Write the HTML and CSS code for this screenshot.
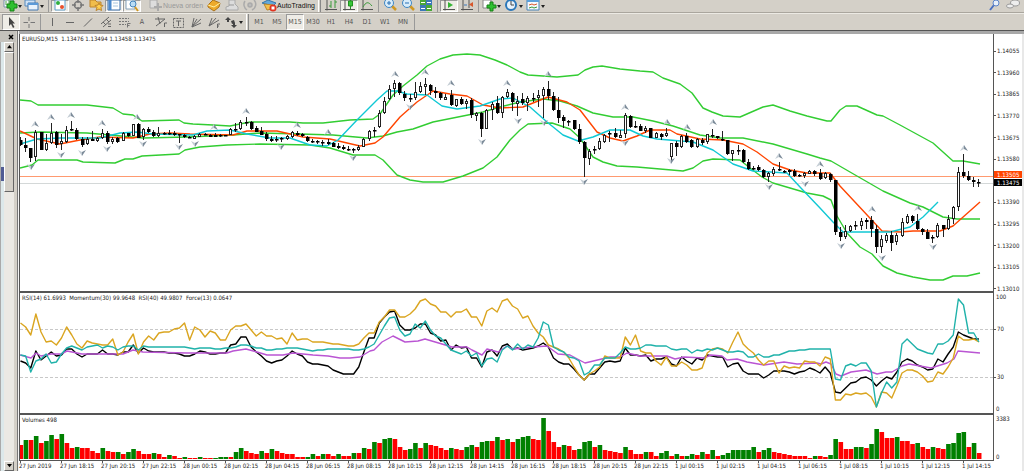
FILE: index.html
```html
<!DOCTYPE html>
<html lang="es">

<head>
    <meta charset="UTF-8">
    <meta name="viewport" content="width=device-width, initial-scale=1.0">
    <title>EURUSD,M15</title>
    <link rel="stylesheet" href="styles.css">
</head>

<body>
    <header>
        <div class="toolbar toolbar-main">
            <button class="tool drop" aria-label="New chart"><svg viewBox="0 0 16 12"><path d="M2 0h9v7H2z" fill="#fff" stroke="#7890a8"/><path d="M4 1v4M7 0v4" stroke="#48a048"/><path d="M8 1h4v3h3v4h-3v3H8V8H5V4h3z" fill="#2fc02f" stroke="#168016"/></svg></button>
            <button class="tool drop" aria-label="Profiles"><svg viewBox="0 0 16 12"><path d="M1 0h10v6H1z" fill="#cfe2f5" stroke="#5488bc"/><path d="M4 3h10v7H4z" fill="#e8f2fc" stroke="#4478b0"/><path d="M4 4h10" stroke="#5b9ad8" stroke-width="2"/></svg></button>
            <span class="sep"></span>
            <button class="tool pressed" aria-label="Market watch"><svg viewBox="0 0 16 12"><path d="M3 0h10v10H3z" fill="#fff" stroke="#5c9cc8"/><circle cx="6" cy="3" r="2" fill="#2fae3f"/><circle cx="10" cy="7" r="2" fill="#e8502c"/></svg></button>
            <button class="tool" aria-label="Data window"><svg viewBox="0 0 16 12" fill="none" stroke="#777" stroke-width="1.5"><circle cx="8" cy="5" r="3.5"/><path d="M8-1v4M8 7v4M2 5h4M10 5h4"/></svg></button>
            <button class="tool" aria-label="Navigator"><svg viewBox="0 0 16 12"><path d="M2 0h5l2 2h4v5H2z" fill="#f0bd4c" stroke="#bd842c"/><path d="M11 3l1 2 3 .5-2 2 .5 3-2.5-1.5L8 10.5l1-3-2-2 3-.5z" fill="#ffcf50" stroke="#bd842c"/></svg></button>
            <button class="tool pressed" aria-label="Terminal"><svg viewBox="0 0 16 12"><path d="M2 0h12v10H2z" fill="#fff" stroke="#386ca8"/><path d="M4 0v10" stroke="#4a88cc" stroke-width="3"/><path d="M7 3h5M7 6h5" stroke="#a8c6e0"/></svg></button>
            <button class="tool pressed" aria-label="Strategy tester"><svg viewBox="0 0 16 12"><path d="M2 0h9v9H2z" fill="#fff" stroke="#84a0b8"/><circle cx="9" cy="4" r="3" fill="#b9dcf5" stroke="#4484bc"/><path d="M11 7l3 4" stroke="#d09824" stroke-width="2"/></svg></button>
            <button class="tool wide order" disabled><svg viewBox="0 0 16 12"><path d="M3 0h7v8H3z" fill="#ddd" stroke="#aaa"/><path d="M10 3h2v3h3v2h-3v3h-2V8H7V6h3z" fill="#aaa"/></svg>Nueva orden</button>
            <button class="tool" aria-label="MetaEditor"><svg viewBox="0 0 16 12"><path d="M2 5l5-5 7 3-1 4-5 4-6-4z" fill="#edaa2c" stroke="#aa731c"/><path d="M2 5l6 2 6-4" fill="none" stroke="#fff0a0"/></svg></button>
            <button class="tool" aria-label="Accounts"><svg viewBox="0 0 16 12"><path d="M5 0h6v4l3 3v3H2V7l3-1z" fill="#dcdcdc" stroke="#aaa"/><path d="M5 5h5" stroke="#999"/></svg></button>
            <button class="tool" aria-label="Signals"><svg viewBox="0 0 16 12" fill="none" stroke="#aaa" stroke-width="1.5"><circle cx="8" cy="5" r="2" fill="#bbb"/><path d="M3 1c-2 3-1 7 2 9M12 0c3 3 2 8-2 10"/></svg></button>
            <button class="tool wide auto"><svg viewBox="0 0 16 12"><path d="M1 3l6-3 8 3-3 3z" fill="#62a8da" stroke="#3576a8"/><path d="M3 4l3 6 5-1 1-4z" fill="#f2c04c" stroke="#b98528"/><circle cx="12" cy="8" r="3.5" fill="#e03420"/><path d="M10.5 6.5h3v3h-3z" fill="#fff"/></svg>AutoTrading</button>
            <span class="handle"></span>
            <button class="tool" aria-label="Bar chart"><svg viewBox="0 0 16 12" fill="none" stroke="#555"><path d="M4 0v10.5M2 9.500h12"/><path d="M8 1v7M6 6h2M12 0v8M12 2h2" stroke="#3a9a3a"/></svg></button>
            <button class="tool pressed" aria-label="Candlesticks"><svg viewBox="0 0 16 12" fill="none" stroke="#555"><path d="M4 0v10.5M2 9.500h12"/><path d="M9.500 0v9" stroke="#2a8a2a"/><path d="M7.500 1h4v5h-4z" fill="#38c838" stroke="#229022"/></svg></button>
            <button class="tool" aria-label="Line chart"><svg viewBox="0 0 16 12" fill="none" stroke="#555"><path d="M4 0v10.5M2 9.500h12"/><path d="M4 7c3-5 5-6 9-1" stroke="#3a9a3a"/></svg></button>
            <span class="sep"></span>
            <button class="tool" aria-label="Zoom in"><svg viewBox="0 0 16 12"><path d="M10 6l4 4" stroke="#d09824" stroke-width="2.5"/><circle cx="7" cy="3" r="4.5" fill="#d8ecfa" stroke="#3e86c4"/><path d="M5 3h4M7 1v4" stroke="#2870b4"/></svg></button>
            <button class="tool" aria-label="Zoom out"><svg viewBox="0 0 16 12"><path d="M10 6l4 4" stroke="#d09824" stroke-width="2.5"/><circle cx="7" cy="3" r="4.5" fill="#d8ecfa" stroke="#3e86c4"/><path d="M5 3h4" stroke="#2870b4"/></svg></button>
            <button class="tool" aria-label="Tile windows"><svg viewBox="0 0 16 12"><path d="M2 0h6v5H2z" fill="#48a838"/><path d="M8 0h6v5H8z" fill="#3c78b8"/><path d="M2 5h6v6H2z" fill="#3c78b8"/><path d="M8 5h6v6H8z" fill="#48a838"/><path d="M3 2.500h4M9 2.500h4M3 8.500h4M9 8.500h4" stroke="#fff"/></svg></button>
            <span class="sep"></span>
            <button class="tool pressed" aria-label="Auto scroll"><svg viewBox="0 0 16 12"><path d="M4 0v10.5M2 9.500h12" stroke="#555"/><path d="M7 2l5 3-5 3z" fill="#35b435"/></svg></button>
            <button class="tool" aria-label="Chart shift"><svg viewBox="0 0 16 12"><path d="M4 0v10.5M2 9.500h12M10 0v8" stroke="#555"/><path d="M14 2v5l-4-2.500z" fill="#d8582c"/><path d="M5 5h3" stroke="#3c78b8"/></svg></button>
            <span class="sep"></span>
            <button class="tool drop" aria-label="Indicators"><svg viewBox="0 0 16 12"><path d="M2 0h8v8H2z" fill="#fff" stroke="#888"/><path d="M9 2h3v3h3v3h-3v3H9V8H6V5h3z" fill="#2fc02f" stroke="#168016"/></svg></button>
            <button class="tool drop" aria-label="Periods"><svg viewBox="0 0 16 12"><circle cx="8" cy="5" r="5" fill="#e7f2fb" stroke="#2c78ba" stroke-width="2"/><path d="M8 1v4h3" stroke="#444" fill="none"/></svg></button>
            <button class="tool drop" aria-label="Templates"><svg viewBox="0 0 16 12"><path d="M2 0h12v10H2z" fill="#f4f8fc" stroke="#4884b8"/><path d="M2 1h12" stroke="#5aa0dc" stroke-width="2"/><path d="M4 5l3-1 2 1 3-1" stroke="#d8582c" fill="none"/><path d="M4 8l3-1 2 1 3-1" stroke="#3a9a3a" fill="none"/></svg></button>
            <span class="spacer"></span>
            <button class="tool" aria-label="Search"><svg viewBox="0 0 16 12"><path d="M7 5L3 10" stroke="#496fc0" stroke-width="2"/><circle cx="9" cy="3" r="3" fill="#e8f0fa" stroke="#5b83c8"/></svg></button>
            <button class="tool" aria-label="Chat"><svg viewBox="0 0 16 12" fill="#eee" stroke="#999"><ellipse cx="10" cy="3" rx="4.5" ry="3"/><ellipse cx="5" cy="6" rx="3.5" ry="2"/></svg></button>
        </div>

        <div class="toolbar toolbar-draw">
            <button class="tool pressed" aria-label="Cursor"><svg viewBox="0 0 16 16"><path d="M6 3v9l2-2 2 4 1.500-1-2-3.500H12z" fill="#444"/></svg></button>
            <button class="tool" aria-label="Crosshair"><svg viewBox="0 0 16 16"><path d="M8 3v4M8 10v4M2.500 8.500H7M9.500 8.500H14" stroke="#777"/></svg></button>
            <span class="sep"></span>
            <button class="tool" aria-label="Vertical line"><svg viewBox="0 0 16 16"><path d="M8.500 4v8" stroke="#666"/></svg></button>
            <button class="tool" aria-label="Horizontal line"><svg viewBox="0 0 16 16"><path d="M4 8.500h8" stroke="#666"/></svg></button>
            <button class="tool" aria-label="Trendline"><svg viewBox="0 0 16 16"><path d="M4 12.500l8-8" stroke="#666"/></svg></button>
            <button class="tool" aria-label="Channel"><svg viewBox="0 0 16 16" fill="none" stroke="#666"><path d="M3 10l8-7M5 13l8-7M5 8l3 3M8 5l3 3M10 10h3M10 12.500h3"/></svg></button>
            <button class="tool" aria-label="Fibonacci"><svg viewBox="0 0 16 16" fill="none" stroke="#777"><path d="M3 4.500h10M3 7.500h10M3 10.500h7" stroke-dasharray="2 1"/><path d="M11.500 13.500v-4h3M11.500 11.500h2"/></svg></button>
            <button class="tool" aria-label="Text">A</button>
            <button class="tool" aria-label="Andrews pitchfork"><svg viewBox="0 0 16 16" fill="none" stroke="#666"><path d="M3 5h10M6 3l2 7M4 12l9-7M12.500 13V9H15"/></svg></button>
            <button class="tool" aria-label="Text label"><svg viewBox="0 0 16 16" fill="none" stroke="#666"><path d="M3.500 4.500h10v9h-10z" stroke-dasharray="2 1"/><path d="M6 7h5M8.500 7v5"/></svg></button>
            <button class="tool" aria-label="Gann fan"><svg viewBox="0 0 16 16" fill="none" stroke="#666"><path d="M4 13L6 4M4 13l5-8M4 13l9-8M4 13l9-4"/></svg></button>
            <button class="tool" aria-label="Fibonacci fan"><svg viewBox="0 0 16 16" fill="none" stroke="#666"><path d="M3 12l3-8M3 12l7-8M3 12l10-6M11.500 14v-4H14M11 12h2"/></svg></button>
            <button class="tool drop" aria-label="Arrows"><svg viewBox="0 0 16 16" fill="#444"><path d="M5 3l3 3H6v2H4V6H2zM8 7l3-1 1 3-3 1zM11 14l-3-3h2V9h2v2h2z"/></svg></button>
            <span class="handle"></span>
            <button class="tool">M1</button>
            <button class="tool">M5</button>
            <button class="tool pressed">M15</button>
            <button class="tool">M30</button>
            <button class="tool">H1</button>
            <button class="tool">H4</button>
            <button class="tool">D1</button>
            <button class="tool">W1</button>
            <button class="tool">MN</button>
            <span class="sep"></span>
        </div>
    </header>

    <div class="workspace">
        <aside>
            <button class="close" aria-label="Close"><svg viewBox="0 0 6 6"><path d="M1 1l4 4M5 1L1 5" stroke="#000" stroke-width="1.5"/></svg></button>
            <div class="list">
                <div class="strip"><span class="selected"></span></div>
                <div class="scrollbar">
                    <button class="arrow" aria-label="Up"><svg viewBox="0 0 6 4"><path d="M3 0l3 4H0z"/></svg></button>
                    <span class="thumb"></span>
                    <span class="track"></span>
                    <button class="arrow" aria-label="Down"><svg viewBox="0 0 6 4"><path d="M0 0h6L3 4z"/></svg></button>
                </div>
            </div>
        </aside>

        <main>
            <section class="plot">
                <h1>EURUSD,M15&nbsp; 1.13476 1.13494 1.13458 1.13475</h1>
                <svg id="price" viewBox="20 34 973 257" preserveAspectRatio="none"></svg>
            </section>
            <div class="axis axis-price">
                <span>1.14055</span>
                <span>1.13960</span>
                <span>1.13865</span>
                <span>1.13770</span>
                <span>1.13675</span>
                <span>1.13580</span>
                <span class="blank"></span>
                <span>1.13390</span>
                <span>1.13295</span>
                <span>1.13200</span>
                <span>1.13105</span>
                <span>1.13010</span>
                <b class="tag ask">1.13505</b>
                <b class="tag bid">1.13475</b>
            </div>

            <section class="plot">
                <h2>RSI(14) 61.6993&nbsp; Momentum(30) 99.9648&nbsp; RSI(40) 49.9807&nbsp; Force(13) 0.0647</h2>
                <svg id="indicators" viewBox="20 293 973 120" preserveAspectRatio="none"></svg>
            </section>
            <div class="axis axis-indicators">
                <span>100</span>
                <span class="level">70</span>
                <span class="level">30</span>
                <span>0</span>
            </div>

            <section class="plot plot-volume">
                <h2>Volumes 498</h2>
                <svg id="volumes" viewBox="20 415 973 45" preserveAspectRatio="none"></svg>
            </section>
            <div class="axis axis-volume">
                <span>3383</span>
                <span>0</span>
            </div>

            <div class="times" id="times"></div>
        </main>
    </div>

    <script src="script.js"></script>
</body>

</html>
```
FILE: styles.css
```css
*,
*::before,
*::after {
    box-sizing: border-box;
}

body {
    margin: 0;
    height: 100vh;
    display: flex;
    flex-direction: column;
    overflow: hidden;
    background-color: #d4d0c8;
    color: #222;
    font-family: "DejaVu Sans Condensed", "DejaVu Sans", sans-serif;
    font-size: 6px;
    line-height: 8px;
}

button {
    margin: 0;
    padding: 0;
    border: 0;
    background: none;
    color: inherit;
    font: inherit;
}

h1,
h2 {
    position: absolute;
    top: 1px;
    left: 2px;
    margin: 0;
    font-size: 6px;
    font-weight: normal;
}

svg {
    display: block;
}

/* toolbars */

.toolbar {
    display: flex;
    align-items: center;
    padding-left: 2px;
}

.toolbar-main {
    height: 13px;
    padding-right: 2px;
    border-bottom: 1px solid #aaa69e;
}

.toolbar-draw {
    height: 18px;
    border-top: 1px solid #eceae4;
    border-bottom: 1px solid #555;
}

.tool {
    flex: none;
    width: 18px;
    height: 100%;
    display: flex;
    align-items: center;
    justify-content: center;
    font-family: "DejaVu Sans Condensed", "DejaVu Sans", sans-serif;
    font-size: 7px;
    color: #555;
}

.tool svg {
    width: 16px;
    flex: none;
}

.drop {
    width: 22px;
    justify-content: flex-start;
}

.drop::after {
    content: '';
    border: 2px solid transparent;
    border-top: 3px solid #222;
    border-bottom: 0;
}

.wide {
    width: auto;
    padding: 0 2px;
    font-family: "Liberation Sans", sans-serif;
}

.order {
    color: #999;
    padding-left: 6px;
}

.auto {
    color: #111;
}

.pressed {
    background-color: #eeece6;
    border: 1px solid #fff;
    border-top-color: #999;
    border-left-color: #999;
}

.sep {
    flex: none;
    width: 1px;
    height: 100%;
    margin: 0 2px;
    background-color: #999;
}

.handle {
    flex: none;
    width: 3px;
    height: 100%;
    margin: 0 1px;
    border-left: 1px solid #fff;
    border-right: 1px solid #888;
}

.spacer {
    flex: 1;
}

/* left panel */

.workspace {
    flex: 1;
    min-height: 0;
    display: flex;
}

aside {
    width: 19px;
    display: flex;
    flex-direction: column;
    border-right: 1px solid #f4f4f4;
    box-shadow: inset -1px 0 #777;
}

.close {
    height: 11px;
    padding-left: 8px;
    background-color: #c4c2bc;
    margin-right: 2px;
}

.close svg {
    width: 6px;
}

.list {
    flex: 1;
    display: flex;
}

.strip {
    width: 4px;
    padding-top: 125px;
    background-color: #dce8ea;
    border-left: 1px solid #aaa;
}

.selected {
    display: block;
    height: 14px;
    background-color: #505c94;
}

.scrollbar {
    width: 10px;
    display: flex;
    flex-direction: column;
    background-color: #ebe9e4;
}

.arrow,
.thumb {
    background-color: #d4d0c8;
    border: 1px solid #fff;
    border-right-color: #666;
    border-bottom-color: #666;
}

.arrow {
    height: 10px;
    display: flex;
    align-items: center;
    justify-content: center;
}

.arrow svg {
    width: 5px;
}

.thumb {
    flex: 34;
}

.track {
    flex: 66;
}

/* charts */

main {
    flex: 1;
    min-width: 0;
    display: grid;
    grid-template-columns: minmax(0, 1fr) 30px;
    grid-template-rows: minmax(0, 259fr) minmax(0, 122fr) minmax(0, 46fr) 10px;
    background-color: #fff;
    border-top: 3px solid #a8a8a8;
}

.plot {
    position: relative;
    border: 1px solid #555;
    border-top: 0;
    border-bottom-width: 2px;
}

.plot-volume {
    border-bottom-width: 1px;
}

.plot svg {
    width: 100%;
    height: 100%;
}

.axis {
    position: relative;
    display: flex;
    flex-direction: column;
    justify-content: space-between;
    border-right: 2px solid #e8e8e8;
}

.axis span {
    height: 8px;
    padding-left: 2px;
}

.axis-price {
    padding-top: 13px;
}

.axis-price span,
.level {
    display: flex;
    align-items: center;
}

.axis-price span::before,
.level::before {
    content: '';
    width: 2px;
    height: 1px;
    margin-left: -2px;
    margin-right: 1px;
    background-color: #555;
}

.axis-price .blank {
    visibility: hidden;
}

.tag {
    position: absolute;
    left: 0;
    right: 0;
    padding-left: 3px;
    line-height: 7px;
    font-weight: normal;
    color: #fff;
}

.ask {
    top: 53%;
    background-color: #ff4500;
}

.bid {
    top: 56%;
    background-color: #000;
}

.axis-indicators {
    display: grid;
    grid-template-rows: 32fr 48fr 32fr 10fr;
}

.times {
    grid-column: 1 / -1;
    display: grid;
    grid-template-columns: repeat(23, 41fr) 60fr;
    border-right: 2px solid #e8e8e8;
    white-space: nowrap;
}

.times span {
    min-width: 0;
}

.times span::before {
    content: '';
    display: block;
    width: 1px;
    height: 2px;
    margin: 0 0 -1px 1px;
    background-color: #555;
}

/* drawing */

polyline {
    fill: none;
    stroke-width: 1.4px;
    stroke-linejoin: round;
}

.band {
    stroke: #32cd32;
}

.slow {
    stroke: #ff4500;
}

.fast {
    stroke: #10c8d4;
}

.momentum {
    stroke: #daa520;
}

.rsi14 {
    stroke: #000;
}

.rsi40 {
    stroke: #ba55d3;
}

.force {
    stroke: #20b2aa;
}

.wick {
    stroke: #222;
    stroke-width: 1px;
}

.up {
    fill: #fff;
    stroke: #222;
    stroke-width: 1px;
}

.down {
    fill: #000;
}

.fractal {
    fill: #7c8b99;
}

.fractal-light {
    fill: #c3ccd3;
}

.ask-line {
    stroke: #ff9a70;
}

.bid-line {
    stroke: #d4d8d8;
}

.level-line {
    stroke: #c8c8c8;
    stroke-dasharray: 3 2;
}

.vol-up {
    fill: #008000;
}

.vol-down {
    fill: #f00;
}
```
FILE: script.js
```js
const NS = 'http://www.w3.org/2000/svg'
const x0 = 20.5
const step = 5.125

function add(parent, tag, clase, attrs) {
    const el = document.createElementNS(NS, tag)
    el.setAttribute('class', clase)
    for (const key in attrs) el.setAttribute(key, attrs[key])
    parent.appendChild(el)
}

// one y per bar
function series(parent, clase, values) {
    const points = values.trim().split(/\s+/).map((y, i) => (x0 + i * step) + ',' + y).join(' ')
    add(parent, 'polyline', clase, { points })
}

const price = document.querySelector('#price')
const indicators = document.querySelector('#indicators')
const volumes = document.querySelector('#volumes')

add(price, 'line', 'ask-line', { x1: 20, x2: 993, y1: 176.5, y2: 176.5 })
add(price, 'line', 'bid-line', { x1: 20, x2: 993, y1: 183.5, y2: 183.5 })

// bands
add(price, 'polyline', 'band', { points: '20,100 31,101 38,105 87,105 113,108 123,114 133,115 142,121 179,120 184,123 193,124 213,125 230,126 240,124 250,122 260,122 290,122 303,123 323,123 350,120 373,119 380,114 393,95 403,86 417,75 427,66 440,59 453,55 467,54 480,55 495,60 507,65 520,72 528,75 543,76 557,77 578,75 585,70 593,67 602,66 620,69 640,71 653,72 663,78 680,84 692,93 703,108 712,112 723,116 740,117 763,107 773,105 790,111 807,116 827,121 831,121 840,110 846,106 857,106 877,115 883,116 900,125 933,143 953,161 963,161 980,164' })
add(price, 'polyline', 'band', { points: '20,133 40,132 87,133 110,135 143,138 187,137 233,135 260,133 300,134 333,135 367,138 383,136 397,132 413,129 433,122 463,116 483,112 500,107 520,102 543,99 560,101 577,106 593,113 613,117 633,117 653,121 673,126 700,135 720,138 743,138 773,144 807,154 820,158 831,161 850,172 883,191 910,203 923,207 943,217 957,219 980,219' })
add(price, 'polyline', 'band', { points: '20,168 32,165 38,160 77,160 83,162 115,163 125,159 133,159 142,156 179,154 185,150 200,147 227,145 260,144 310,145 330,148 353,155 375,155 383,160 397,175 410,180 423,182 443,182 463,176 483,168 497,157 510,140 520,130 528,124 552,123 570,129 580,138 593,157 603,162 617,166 637,167 683,171 693,168 703,161 713,159 740,160 750,168 762,177 773,183 790,188 807,193 823,196 831,200 837,216 847,233 860,247 872,254 883,266 897,273 913,277 930,280 943,280 953,276 967,276 980,273' })

// moving averages
add(price, 'polyline', 'slow', { points: '20,131 37,139 60,144 80,140 100,137 133,138 150,134 170,133 190,134 233,135 247,131 277,131 303,137 330,139 360,146 375,143 383,137 400,117 417,102 433,91 450,94 467,96 483,105 500,108 523,107 548,97 567,102 580,110 597,132 610,138 623,141 637,136 650,130 670,130 677,134 700,139 723,140 743,144 757,152 773,164 790,170 807,173 830,173 840,186 882,231 900,232 913,231 940,231 953,226 980,202' })
add(price, 'polyline', 'fast', { points: '20,144 37,139 60,138 100,138 120,133 137,132 153,134 193,135 207,131 230,130 247,134 270,138 290,138 310,145 327,146 338,140 357,120 377,100 387,91 397,91 407,94 427,95 442,106 457,109 480,106 500,99 513,98 530,107 547,122 563,135 578,141 593,137 610,130 630,130 643,136 657,139 693,142 713,150 733,164 753,171 787,173 800,187 820,208 833,222 843,232 890,232 910,227 923,217 938,202' })

// u = up, d = down, then body top, body bottom, high, low
const candles = `
d140,145,137,146 d145,148,138,152 d148,158,148,162 u132,157,130,161 d132,150,132,150 u143,150,134,151 u133,143,123,144 d132,145,131,148
u141,144,134,150 u130,142,126,143 d129,130,121,131 d130,139,128,140 d139,145,137,147 u139,144,137,145 d139,141,131,141 u138,141,137,142
u133,138,129,139 d133,142,131,144 u139,141,137,144 d138,142,137,143 u133,141,132,141 d133,136,133,137 u124,136,124,136 d124,138,123,138
u129,137,128,140 d129,132,127,133 d132,136,130,137 u133,136,127,137 d133,134,132,135 d133,134,130,135 d133,135,131,136 d134,135,134,143
d135,137,134,138 d137,138,136,138 u136,138,135,139 u134,136,133,137 d134,135,133,135 d135,137,134,137 d135,137,133,137 d135,136,134,137
d135,136,135,136 u129,135,128,135 d129,130,123,132 u122,129,120,130 d122,123,117,126 d122,129,121,130 d128,132,126,132 d131,135,127,135
d134,139,132,141 d139,141,136,142 d139,140,136,142 d138,139,137,142 u136,139,135,140 u132,137,131,138 d133,135,131,136 d134,136,133,137
d137,141,136,142 d141,142,139,143 d141,142,140,144 d142,143,140,146 d142,144,139,145 d143,147,142,147 d146,148,143,149 d147,149,145,150
d149,150,146,151 d149,150,148,153 u147,150,145,151 u139,147,138,147 u131,139,130,141 d130,131,127,137 u113,127,110,128 u101,113,97,114
u89,99,85,100 u83,89,80,97 d83,93,82,95 d94,98,91,101 d98,99,94,102 u92,98,82,100 u86,92,82,93 u84,86,78,95
d85,91,84,95 d91,93,87,98 d93,98,92,100 u97,99,94,100 d95,105,90,106 u99,106,99,107 d99,104,97,105 u101,104,99,109
d100,115,98,118 u113,115,112,121 d113,129,112,137 u110,129,109,129 u104,110,102,120 d103,113,96,114 u97,113,96,118 u92,97,89,98
d93,102,92,111 u101,103,96,116 d99,103,93,105 u98,103,96,111 d98,99,93,102 u95,98,90,107 u89,96,87,118 d89,96,81,100
d96,110,92,111 d110,118,97,123 d117,121,115,128 d121,122,120,126 d120,129,120,130 d129,142,124,144 d142,158,141,177 u151,159,149,165
d149,150,146,154 u141,149,138,150 u135,142,134,143 d133,134,131,142 d133,137,128,138 u135,137,130,138 u115,134,113,138 d116,127,115,128
d126,127,121,128 d126,131,124,131 u128,131,126,133 d128,138,128,138 u133,138,132,138 d134,137,133,140 u133,136,128,137 u143,157,143,160
d143,147,141,156 u136,147,135,148 d136,142,133,143 d140,147,139,148 u139,147,138,148 d140,143,138,145 u134,142,134,144 d135,136,129,138
d136,138,136,139 d139,140,131,141 d140,154,140,155 u150,154,150,161 d150,151,145,155 d150,162,149,163 d162,169,159,170 d168,169,166,170
d167,170,165,171 d170,177,169,178 u173,177,172,182 u169,174,167,176 d169,170,162,171 d171,172,170,173 d170,172,169,175 d171,176,169,177
d175,176,174,177 u173,176,172,178 u171,174,170,174 d171,174,170,176 d173,179,169,180 u173,178,172,179 d174,180,173,182 d180,232,180,235
d232,237,227,241 u231,237,225,239 u226,231,225,232 d225,226,221,230 u221,226,218,230 d220,222,218,229 d220,229,216,237 d229,247,225,253
u239,247,235,253 u235,241,233,243 d235,243,231,251 u235,242,233,245 u222,236,218,237 u216,223,214,224 d216,221,215,223 d221,229,214,230
d229,232,228,235 d232,239,229,239 d237,238,235,243 u225,237,223,238 d225,229,225,237 u219,229,215,230 u207,219,206,224 u172,207,167,211
d172,176,154,178 d176,180,171,181 d180,182,177,187 d182,183,179,187`

candles.trim().split(/\s+/).forEach((item, i) => {
    const [top, bottom, high, low] = item.slice(1).split(',').map(Number)
    const x = Math.round(x0 + i * step - 0.5) + 0.5
    add(price, 'line', 'wick', { x1: x, x2: x, y1: high, y2: low })
    if (item[0] === 'u') {
        add(price, 'rect', 'up', { x: x - 1, y: top + 0.5, width: 2, height: Math.max(bottom - top - 1, 2) })
    } else {
        add(price, 'rect', 'down', { x: x - 1.5, y: top, width: 3.5, height: Math.max(bottom - top, 1.5) })
    }
})

// fractals
const tops = [[35, 124], [51, 117], [71, 115], [102, 123], [137, 117], [214, 127], [246, 111], [297, 125], [328, 132], [395, 74], [425, 72], [451, 83], [507, 83], [548, 74], [625, 107], [667, 122], [687, 127], [713, 122], [779, 156], [820, 164], [872, 209], [918, 208], [964, 148]]
const bottoms = [[31, 167], [61, 155], [82, 153], [107, 149], [143, 144], [179, 147], [195, 144], [281, 147], [353, 158], [410, 107], [482, 142], [518, 121], [544, 123], [584, 182], [625, 143], [671, 161], [769, 187], [805, 184], [841, 246], [882, 258], [933, 247]]

function fractal(x, y, s) {
    add(price, 'path', 'fractal-light', { d: `M${x} ${y - 3 * s}L${x - 4} ${y + 3 * s}L${x} ${y + s}z` })
    add(price, 'path', 'fractal', { d: `M${x} ${y - 3 * s}L${x + 4} ${y + 3 * s}L${x} ${y + s}z` })
}

tops.forEach(([x, y]) => fractal(x, y, 1))
bottoms.forEach(([x, y]) => fractal(x, y, -1))

// indicators
add(indicators, 'line', 'level-line', { x1: 20, x2: 993, y1: 329.5, y2: 329.5 })
add(indicators, 'line', 'level-line', { x1: 20, x2: 993, y1: 377.5, y2: 377.5 })

series(indicators, 'rsi14', `
361 363 368 351 360 356 352 356 355 349 349 354 357 354 354 354 350 354 354 355 352 352 345 353 348 351 352 352 352 353
353 354 356 356 354 351 352 354 354 353 353 345 344 337 337 347 352 356 361 363 361 360 356 351 354 356 362 364 364 365
366 370 372 374 374 374 367 352 338 338 323 317 312 311 325 330 330 328 324 324 333 335 341 340 350 345 348 347 358 358
367 352 350 356 346 344 349 348 350 349 348 346 343 347 358 362 364 364 369 375 380 374 374 368 362 361 362 361 348 355
355 356 355 361 359 359 357 364 366 357 361 364 358 360 355 356 357 357 367 364 363 371 374 374 374 378 375 371 371 371
372 374 372 371 368 370 373 367 373 392 393 388 383 382 378 377 380 386 381 377 379 372 362 359 361 365 367 370 369 359
362 354 347 332 335 337 339 339`)

add(indicators, 'polyline', 'rsi40', { points: '20,355 31,358 36,353 41,356 51,354 61,354 67,351 82,354 123,354 133,350 143,352 187,353 227,353 233,351 246,349 257,352 267,355 283,355 293,353 313,355 328,356 340,358 350,358 360,357 370,351 374,350 382,342 393,336 405,342 418,341 425,339 442,344 452,347 467,347 472,350 482,355 487,349 498,352 507,346 513,349 533,347 547,346 558,354 570,355 585,363 610,357 620,357 627,353 640,356 667,356 675,359 684,357 704,358 711,355 722,356 727,360 737,359 747,362 764,365 784,362 797,364 817,363 821,364 826,362 831,364 836,374 841,376 851,372 866,370 877,374 886,372 892,372 902,366 909,364 931,368 947,363 954,359 958,351 980,353' })

series(indicators, 'momentum', `
323 327 335 314 332 342 341 345 338 327 335 344 348 341 343 344 345 345 339 355 352 342 334 354 342 336 340 333 332 332
329 328 323 340 327 330 337 331 333 340 340 330 326 326 324 330 336 332 336 336 339 338 344 333 340 339 339 342 342 342
343 344 344 345 346 346 344 338 333 333 322 317 310 310 317 317 314 309 301 299 304 306 312 312 317 312 312 309 317 317
326 311 308 312 301 299 306 309 318 316 326 333 337 345 347 349 352 358 367 375 380 374 371 367 356 358 358 358 337 345
335 351 353 353 361 365 357 366 366 362 365 370 370 368 353 349 348 349 353 342 332 344 349 353 360 365 361 361 373 366
368 367 368 361 362 362 366 357 359 400 400 394 395 393 394 393 397 407 392 393 398 386 373 370 370 372 376 382 381 372
374 367 358 336 340 340 339 342`)

series(indicators, 'force', `
355 356 372 361 359 354 363 362 354 348 346 348 350 347 346 345 348 346 347 350 347 346 346 350 346 347 347 347 347 347
347 347 347 348 349 348 348 348 349 349 348 348 347 345 345 346 348 348 350 350 349 349 348 348 348 349 350 351 350 350
349 349 349 349 349 350 350 349 347 344 335 326 318 317 330 336 334 324 328 321 330 336 338 344 350 352 354 351 356 353
366 359 358 362 350 346 350 344 349 345 347 338 322 325 347 350 352 357 358 361 375 372 365 365 358 358 358 353 347 349
349 348 345 345 346 346 346 349 350 349 349 353 350 351 349 350 348 350 352 352 351 352 357 357 354 357 357 355 355 353
351 351 350 350 349 349 349 349 349 379 380 366 364 366 363 363 371 407 393 382 388 382 344 339 344 349 351 353 354 344
344 341 335 299 305 333 333 342`)

// volumes: g = up, r = down
const bars = `
r14 g19 r19 g23 r16 g18 g24 r20 g25 r16 r11 g12 r11 r11 r8 r6 g11 r8 r7 g7 r5 g7 g10 r8 r5 r5 g6 r5 r2 g4
r3 r1 g2 r1 r1 g2 r1 r1 g1 g2 g2 r2 g7 g11 r8 r6 r5 g8 r6 g10 r8 r6 r5 r5 r2 r2 g2 g5 r3 g5
r5 r3 g5 r3 r3 g6 r6 g11 r10 g17 r16 g20 g21 r20 r12 r9 g10 g16 r11 g16 r14 r13 r11 r9 g11 r10 r9 g12 g14 r12
g17 g18 r18 g22 r19 g20 r17 g20 g22 g23 r20 r19 g41 r28 r17 r12 g14 r13 r9 g10 g17 g18 r12 g14 r9 r8 r7 r6 g12 r9
r5 r5 g7 r7 r3 g6 g8 r3 g5 r3 g3 g5 r4 g7 r5 g9 r3 g4 g6 g9 g9 g9 g9 g12 r7 g9 g11 r7 r6 r5
r4 r3 r3 r3 r1 g3 r3 r2 g4 g20 r17 r10 r10 g12 g12 r11 g15 g30 r27 r21 r21 g22 r18 r18 r15 g16 r12 r10 g12 r11
r10 g15 g16 g26 g27 r12 g16 r6`

bars.trim().split(/\s+/).forEach((item, i) => {
    const height = Number(item.slice(1))
    add(volumes, 'rect', item[0] === 'g' ? 'vol-up' : 'vol-down', { x: x0 + i * step - 2, y: 459 - height, width: 4.6, height })
})

// time axis, a label every 8 bars
const labels = ['27 Jun 2019', '27 Jun 18:15', '27 Jun 20:15', '27 Jun 22:15']
for (let h = 0; h < 24; h += 2) labels.push('28 Jun ' + String(h).padStart(2, '0') + ':15')
for (let h = 0; h < 16; h += 2) labels.push('1 Jul ' + String(h).padStart(2, '0') + ':15')

labels.forEach((label) => {
    const span = document.createElement('span')
    span.textContent = label
    document.querySelector('#times').appendChild(span)
})
```
